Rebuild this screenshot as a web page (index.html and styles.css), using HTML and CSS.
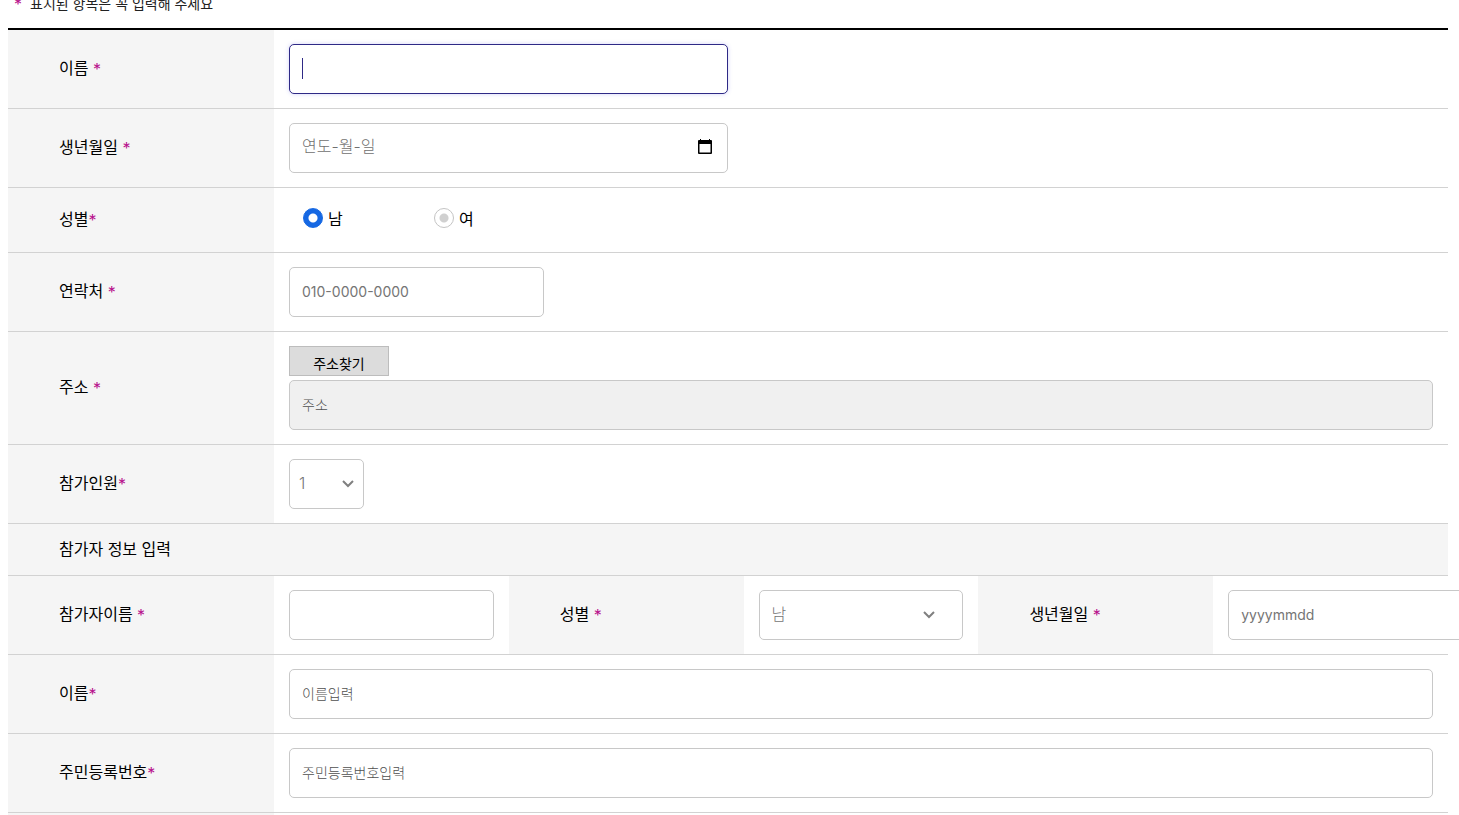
FILE: index.html
```
<!DOCTYPE html>
<html lang="ko">
<head>
<meta charset="utf-8">
<title>참가 신청</title>
<link rel="stylesheet" href="styles.css">
</head>
<body>
<form class="form">
  <p class="note"><span class="req">*</span>표시된 항목은 꼭 입력해 주세요</p>
  <div class="rows">
    <div class="row">
      <label class="head" for="name">이름 <span class="req">*</span></label>
      <div class="cell"><input class="field field-mid field-active" id="name" type="text" autocomplete="off"></div>
    </div>
    <div class="row">
      <label class="head" for="birth">생년월일 <span class="req">*</span></label>
      <div class="cell">
        <div class="wrap wrap-mid">
          <input class="field field-date" id="birth" type="text" placeholder="연도-월-일">
          <button class="picker" type="button" aria-label="날짜 선택">
            <svg width="14" height="15" viewBox="0 0 14 15"><path d="M2 0h1v1h8V0h1v1h1q1 0 1 1v12q0 1-1 1H1q-1 0-1-1V2q0-1 1-1h1zM1.500 5v8.500h11V5z" fill="#000" fill-rule="evenodd"/></svg>
          </button>
        </div>
      </div>
    </div>
    <div class="row">
      <span class="head" id="sex">성별<span class="req">*</span></span>
      <div class="cell">
        <div class="radios" role="radiogroup" aria-labelledby="sex">
          <label class="radio"><input type="radio" name="sex" checked>남</label>
          <label class="radio"><input type="radio" name="sex">여</label>
        </div>
      </div>
    </div>
    <div class="row">
      <label class="head" for="phone">연락처 <span class="req">*</span></label>
      <div class="cell"><input class="field field-short" id="phone" type="tel" placeholder="010-0000-0000"></div>
    </div>
    <div class="row">
      <label class="head" for="addr">주소 <span class="req">*</span></label>
      <div class="cell cell-stack">
        <button class="find" type="button">주소찾기</button>
        <input class="field field-off" id="addr" type="text" placeholder="주소" readonly>
      </div>
    </div>
    <div class="row">
      <label class="head" for="count">참가인원<span class="req">*</span></label>
      <div class="cell">
        <div class="wrap wrap-tiny">
          <select class="field select-tiny" id="count"><option>1</option><option>2</option></select>
          <svg class="arrow" width="12" height="8" viewBox="0 0 12 8"><path d="M1 1l5 5 5-5" fill="none" stroke="#808080" stroke-width="2"/></svg>
        </div>
      </div>
    </div>
    <div class="row row-title"><h2 class="title">참가자 정보 입력</h2></div>
    <div class="row row-person">
      <label class="head" for="pname">참가자이름 <span class="req">*</span></label>
      <div class="cell"><input class="field" id="pname" type="text"></div>
      <label class="head" for="psex">성별 <span class="req">*</span></label>
      <div class="cell">
        <div class="wrap">
          <select class="field" id="psex"><option>남</option><option>여</option></select>
          <svg class="arrow arrow-in" width="12" height="8" viewBox="0 0 12 8"><path d="M1 1l5 5 5-5" fill="none" stroke="#808080" stroke-width="2"/></svg>
        </div>
      </div>
      <label class="head" for="pbirth">생년월일 <span class="req">*</span></label>
      <div class="cell"><input class="field field-short" id="pbirth" type="text" placeholder="yyyymmdd"></div>
    </div>
    <div class="row">
      <label class="head" for="rname">이름<span class="req">*</span></label>
      <div class="cell"><input class="field" id="rname" type="text" placeholder="이름입력"></div>
    </div>
    <div class="row">
      <label class="head" for="rnum">주민등록번호<span class="req">*</span></label>
      <div class="cell"><input class="field" id="rnum" type="text" placeholder="주민등록번호입력"></div>
    </div>
    <div class="row">
      <span class="head"></span>
      <div class="cell"></div>
    </div>
  </div>
</form>
</body>
</html>
```
FILE: styles.css
```
* { box-sizing: border-box; }

body {
  margin: 0;
  height: 100vh;
  overflow: hidden;
  background: #fff;
  color: #000;
  font-family: "Noto Sans CJK KR", sans-serif;
  font-size: 16px;
  line-height: 24px;
}

.form { margin: 0 11px 0 8px; }

.note {
  margin: 0 0 22px;
  padding-left: 6px;
  font-size: 14px;
  line-height: 6px;
  color: #222;
}
.note .req { margin-right: 8px; }

.req {
  color: #b8108c;
  font-family: Inter, sans-serif;
  font-size: 16px;
  line-height: 0;
  vertical-align: -1px;
}

.rows { border-top: 2px solid #000; }

.row {
  display: grid;
  grid-template-columns: 266px minmax(0, 1fr);
  border-bottom: 1px solid #d2d2d2;
}
.row-title { display: block; background: #f5f5f5; }
.row-person { grid-template-columns: 266px repeat(5, minmax(0, 1fr)); }

.head {
  display: block;
  align-self: stretch;
  align-content: center;
  padding: 0 0 4px 51px;
  background: #f5f5f5;
  white-space: pre;
}

.title {
  margin: 0;
  padding: 12px 0 15px 51px;
  font-size: 16px;
  font-weight: 400;
  line-height: 24px;
}

.cell { padding: 14px 15px; }
.cell-stack {
  display: flex;
  flex-direction: column;
  align-items: flex-start;
  gap: 4px;
}

.field {
  display: block;
  width: 100%;
  height: 50px;
  margin: 0;
  padding: 0 12px 2px;
  border: 1px solid #c8c8c8;
  border-radius: 5px;
  background-color: #fff;
  color: #757575;
  font-family: Inter, "Noto Sans CJK KR", sans-serif;
  font-size: 14px;
  font-weight: 300;
  outline: none;
  appearance: none;
}
.field::placeholder { color: #505050; opacity: 1; }

select.field { padding-bottom: 3px; font-size: 16px; }

.field-mid, .wrap-mid { width: 439px; }
.field-short { width: 255px; font-weight: 400; }
.field-short::placeholder { color: #757575; }
.field-off { background-color: #f0f0f0; }
.field-date { padding-bottom: 4px; font-size: 16px; }
.field-date::placeholder { color: #707070; }

.field-active {
  border-color: #2f2a86;
  box-shadow: 0 0 4px rgba(80, 80, 230, 0.25);
  background: linear-gradient(#2f2a86, #2f2a86) 12px 13px / 1px 21px no-repeat #fff;
}

.wrap { position: relative; }
.wrap-tiny { width: 75px; }
.select-tiny { padding-left: 9px; }

.picker {
  position: absolute;
  top: 16px;
  right: 16px;
  display: flex;
  padding: 0;
  border: 0;
  background: none;
}

.arrow {
  position: absolute;
  top: 21px;
  right: 10px;
  pointer-events: none;
}
.arrow-in { right: 28px; }

.radios {
  display: flex;
  height: 36px;
  padding: 0 0 4px 14px;
}
.radio {
  display: flex;
  align-items: center;
  gap: 5px;
  width: 131px;
}
.radio input {
  width: 20px;
  height: 20px;
  margin: 0;
  border: 1px solid #c4c4c4;
  border-radius: 50%;
  background: radial-gradient(circle, #d0d0d0 4px, #fff 5px);
  appearance: none;
}
.radio input:checked {
  border-color: #1668e3;
  background: radial-gradient(circle, #fff 4px, #1668e3 5px);
}

.find {
  width: 100px;
  height: 30px;
  padding: 4px 0 0;
  border: 1px solid #bdbdbd;
  background: #dcdcdc;
  color: #000;
  font-family: "Noto Sans CJK KR", sans-serif;
  font-size: 14px;
  line-height: 20px;
}
```
